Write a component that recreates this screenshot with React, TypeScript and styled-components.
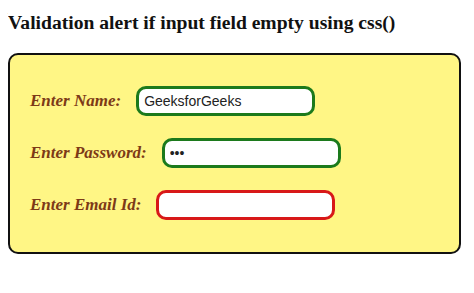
import React from "react";
import styled, { createGlobalStyle } from "styled-components";

const GlobalStyle = createGlobalStyle`
  body {
    margin: 8px;
    background: #ffffff;
    font-family: "Liberation Serif", "Times New Roman", serif;
  }
`;

const Heading = styled.h3`
  margin: 3px 0 0;
  font-size: 19.6px;
  line-height: 24px;
  font-weight: bold;
  color: #111;
`;

const Form = styled.form`
  box-sizing: border-box;
  margin-top: 18px;
  width: 453px;
  height: 201px;
  padding: 31px 20px;
  border: 2px solid #111;
  border-radius: 10px;
  background: #fff685;
  display: flex;
  flex-direction: column;
  gap: 22px;
`;

const Row = styled.div`
  display: flex;
  align-items: center;
  gap: 15px;
`;

const Label = styled.label`
  font-family: "Liberation Serif", "Times New Roman", serif;
  font-size: 17px;
  font-weight: bold;
  font-style: italic;
  color: #7d3a17;
`;

const Field = styled.input<{ $invalid?: boolean }>`
  box-sizing: border-box;
  width: 179px;
  height: 30px;
  padding: 0 5px;
  border: 3px solid ${({ $invalid }) => ($invalid ? "#d81818" : "#1c7a1c")};
  border-radius: 10px;
  background: #fff;
  outline: none;
  font-family: "Liberation Sans", Arial, sans-serif;
  font-size: 14px;
  color: #222;
`;

export default function App() {
  return (
    <>
      <GlobalStyle />
      <Heading>Validation alert if input field empty using css()</Heading>
      <Form onSubmit={(e) => e.preventDefault()}>
        <Row>
          <Label htmlFor="name">Enter Name:</Label>
          <Field id="name" type="text" defaultValue="GeeksforGeeks" />
        </Row>
        <Row>
          <Label htmlFor="pass">Enter Password:</Label>
          <Field id="pass" type="password" defaultValue="abc" />
        </Row>
        <Row>
          <Label htmlFor="email">Enter Email Id:</Label>
          <Field id="email" type="email" $invalid />
        </Row>
      </Form>
    </>
  );
}
